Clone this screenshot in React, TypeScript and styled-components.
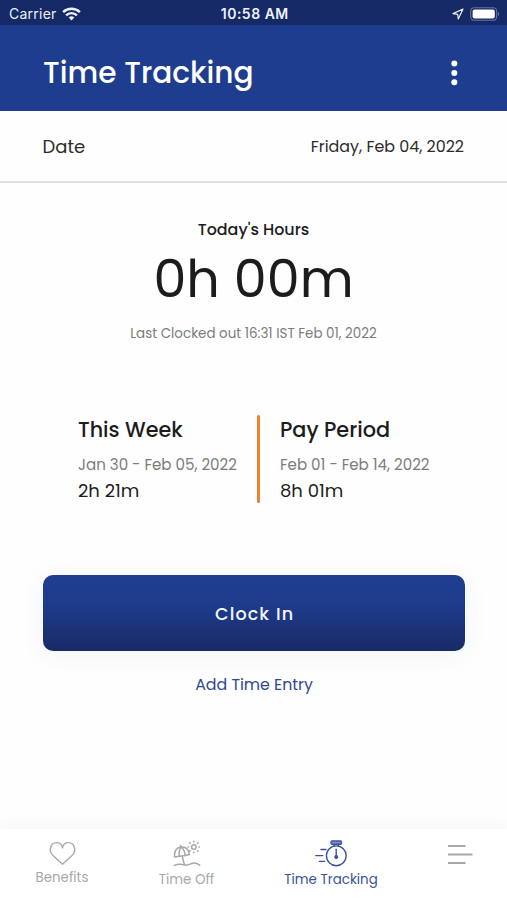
import React from 'react';
import styled, { createGlobalStyle } from 'styled-components';

const GlobalStyle = createGlobalStyle`
  *, *::before, *::after { box-sizing: border-box; }
  body {
    margin: 0;
    background: #fefefe;
    color: #1c1c1c;
    font-family: Poppins, Inter, sans-serif;
  }
`;

const blue = '#1f3d8f';
const grey = '#7c7c7c';

const Screen = styled.div`
  display: flex;
  flex-direction: column;
  width: 507px;
  height: 900px;
  overflow: hidden;
`;

interface LabelProps {
  $size: number;
  $line?: number;
  $weight?: number;
  $track?: number;
  $color?: string;
}

const Label = styled.span<LabelProps>`
  display: block;
  white-space: nowrap;
  font-size: ${(p) => p.$size}px;
  line-height: ${(p) => p.$line ?? 24}px;
  font-weight: ${(p) => p.$weight ?? 400};
  letter-spacing: ${(p) => p.$track ?? 0}px;
  margin-right: ${(p) => -(p.$track ?? 0)}px;
  color: ${(p) => p.$color ?? 'inherit'};
`;

const StatusBar = styled.div`
  display: grid;
  grid-template-columns: 1fr auto 1fr;
  align-items: center;
  height: 25px;
  padding: 3px 7px 0 9px;
  background: #142965;
  color: #eef1fa;
  font-family: Inter, sans-serif;
`;

const StatusGroup = styled.div<{ $end?: boolean }>`
  display: flex;
  align-items: center;
  gap: 6px;
  justify-content: ${(p) => (p.$end ? 'flex-end' : 'flex-start')};
`;

const Header = styled.header`
  display: flex;
  align-items: center;
  justify-content: space-between;
  height: 86px;
  padding: 9px 49px 0 43px;
  background: ${blue};
  color: #fff;
`;

const Title = styled.h1`
  margin: 0;
  font-size: 29.6px;
  line-height: 40px;
  font-weight: 500;
`;

const IconButton = styled.button`
  display: flex;
  padding: 0;
  border: 0;
  background: none;
  color: inherit;
`;

const DateRow = styled.section`
  display: flex;
  align-items: center;
  justify-content: space-between;
  height: 72px;
  padding: 1px 43px 0 42.5px;
  border-bottom: 2px solid #dfdfdf;
  color: #2b2b2b;
`;

const Today = styled.section`
  display: flex;
  flex-direction: column;
  align-items: center;
  padding-top: 35px;
`;

const HoursValue = styled.div`
  margin: 7px 0 15px;
  font-size: 52.4px;
  line-height: 60px;
`;

const Periods = styled.section`
  display: grid;
  grid-template-columns: 179px 3px 1fr;
  height: 88px;
  margin: 71px 0 0 78px;
`;

const Period = styled.div`
  display: flex;
  flex-direction: column;
  padding-top: 1px;
`;

const SecondPeriod = styled(Period)`
  padding-left: 20px;
`;

const PeriodRange = styled.div`
  margin: 11px 0 4px;
`;

const Divider = styled.div`
  border-radius: 2px;
  background: #e98433;
`;

const Actions = styled.section`
  display: flex;
  flex-direction: column;
  align-items: center;
  gap: 22px;
  margin: 72px 42px 0 43px;
`;

const ClockButton = styled.button`
  display: flex;
  align-items: center;
  justify-content: center;
  width: 100%;
  height: 76px;
  padding: 1px 0 0;
  border: 0;
  border-radius: 10px;
  background: linear-gradient(#1f3e90 0%, #1e3b8c 38%, #182b66 100%);
  box-shadow: 0 4px 26px rgba(31, 61, 143, 0.06);
  color: #f4f6ff;
  font-family: inherit;
`;

const TextButton = styled.button`
  padding: 0;
  border: 0;
  background: none;
  color: #2f488f;
  font-family: inherit;
`;

const Nav = styled.nav`
  display: grid;
  grid-template-columns: 124px 125px 164px 94px;
  height: 71px;
  margin-top: auto;
  background: #fff;
  box-shadow: 0 -3px 14px rgba(31, 61, 143, 0.045);
`;

const NavItem = styled.a<{ $active?: boolean; $drop?: number }>`
  display: flex;
  flex-direction: column;
  align-items: center;
  gap: 2px;
  padding-top: ${(p) => 10 + (p.$drop ?? 0)}px;
  color: ${(p) => (p.$active ? '#3a529b' : '#a8a8a8')};
`;

const Icon = styled.svg`
  display: block;
  flex: none;
  fill: none;
  stroke: currentColor;
  stroke-linecap: round;
  stroke-linejoin: round;
`;

const FlatIcon = styled(Icon)`
  stroke-linecap: butt;
`;

const WifiIcon = () => (
  <FlatIcon width="19" height="14" viewBox="0 0 19 14" strokeWidth="2.4">
    <path d="M1.1 5.2a12 12 0 0 1 16.8 0M4.1 8.4a7.6 7.6 0 0 1 10.8 0" />
    <path d="M9.5 13.4 6.7 10.6a4 4 0 0 1 5.6 0Z" fill="currentColor" stroke="none" />
  </FlatIcon>
);

const LocationIcon = () => (
  <Icon width="12" height="12" viewBox="0 0 12 12" strokeWidth="1.2">
    <path d="M11 1 1 5.6l4.7.7.6 4.7Z" />
  </Icon>
);

const BatteryIcon = () => (
  <Icon width="30" height="14" viewBox="0 0 30 14">
    <rect x=".7" y=".7" width="26" height="12.6" rx="3.6" stroke="#66739f" strokeWidth="1.1" />
    <rect x="2.6" y="2.6" width="22.2" height="8.8" rx="2" fill="#fff" stroke="none" />
    <path d="M28 4.8c1.6.7 1.6 3.7 0 4.4Z" fill="#66739f" stroke="none" />
  </Icon>
);

const MoreIcon = () => (
  <Icon width="8" height="26" viewBox="0 0 8 26">
    <g fill="currentColor" stroke="none">
      <circle cx="4.3" cy="3.6" r="3" />
      <circle cx="4.3" cy="13" r="3" />
      <circle cx="4.3" cy="22.3" r="3" />
    </g>
  </Icon>
);

const HeartIcon = () => (
  <Icon width="28" height="27" viewBox="0 0 28 27" strokeWidth="1.4">
    <path d="M14.5 25.2L5 16.6C2.6 14.2 2 11.6 2.4 9.3C3 5.8 5.5 3.6 8.6 3.6C11.6 3.6 14 5.6 14.5 8.8C15 5.6 17.4 3.6 20.4 3.6C23.5 3.6 26 5.8 26.6 9.3C27 11.6 26.4 14.2 24 16.6Z" />
  </Icon>
);

const BeachIcon = () => (
  <Icon width="28" height="28" viewBox="0 0 28 28" strokeWidth="1.5">
    <path d="M1.6 17C1 10.8 4 7.7 8 7.1C12 6.6 15.4 8.6 16.4 14.5L12.2 15.4 6.4 16.3Z" />
    <path d="M7.8 7 7.5 5.4M6.4 16.3C5.7 12.5 6.2 9.6 8 7.1C10.6 8.8 11.9 11.6 12.2 15.4M9.1 16 11.4 24.6" />
    <path d="M1.2 25.4C5 23.8 8 24 11.5 24.9C16 26 17.2 23.2 21 23.1C24 23 25 24 26.8 25.3" />
    <circle cx="20.8" cy="7" r="2.3" />
    <path d="M20.8 1.3v.5M20.8 12.2v.5M15.1 7h.5M26 7h.5M16.7 2.9l.4.4M24.5 10.7l.4.4M16.7 11.1l.4-.4M24.5 3.3l.4-.4" strokeWidth="1.6" />
  </Icon>
);

const StopwatchIcon = () => (
  <Icon width="34" height="28" viewBox="0 0 34 28" strokeWidth="1.4">
    <rect x="17" y="1" width="10.4" height="3.2" rx="1" fill="#8492c4" />
    <path d="M20 4.4v1.6M24.4 4.4v1.6" />
    <circle cx="22.3" cy="15.8" r="9.9" />
    <path d="M22.2 9.2v7.4" />
    <circle cx="22.2" cy="17" r="1.3" fill="currentColor" />
    <path d="M7 9.5h5M1.8 15.6h7M5.4 21.4h5.2" />
  </Icon>
);

const MenuIcon = () => (
  <FlatIcon width="26" height="22" viewBox="0 0 26 22" strokeWidth="2.2">
    <path d="M1 2h17.5M1 10.5h24.5M1 19h17.5" />
  </FlatIcon>
);

export default function App() {
  return (
    <Screen>
      <GlobalStyle />
      <StatusBar>
        <StatusGroup>
          <Label $size={14} $line={20} $track={0.25}>Carrier</Label>
          <WifiIcon />
        </StatusGroup>
        <Label $size={14} $line={20} $weight={600} $track={0.5}>10:58 AM</Label>
        <StatusGroup $end>
          <LocationIcon />
          <BatteryIcon />
        </StatusGroup>
      </StatusBar>

      <Header>
        <Title>Time Tracking</Title>
        <IconButton aria-label="More options"><MoreIcon /></IconButton>
      </Header>

      <DateRow>
        <Label $size={18}>Date</Label>
        <Label $size={15.9}>Friday, Feb 04, 2022</Label>
      </DateRow>

      <Today>
        <Label $size={15.9} $weight={500}>Today's Hours</Label>
        <HoursValue>0h 00m</HoursValue>
        <Label $size={13.45} $line={20} $color={grey}>
          Last Clocked out 16:31 IST Feb 01, 2022
        </Label>
      </Today>

      <Periods>
        <Period>
          <Label $size={20.7} $line={28} $weight={500}>This Week</Label>
          <PeriodRange>
            <Label $size={15.05} $line={20} $color={grey}>Jan 30 - Feb 05, 2022</Label>
          </PeriodRange>
          <Label $size={18}>2h 21m</Label>
        </Period>
        <Divider />
        <SecondPeriod>
          <Label $size={20.8} $line={28} $weight={500}>Pay Period</Label>
          <PeriodRange>
            <Label $size={15.05} $line={20} $color={grey}>Feb 01 - Feb 14, 2022</Label>
          </PeriodRange>
          <Label $size={18}>8h 01m</Label>
        </SecondPeriod>
      </Periods>

      <Actions>
        <ClockButton>
          <Label $size={17.6} $weight={500} $track={1.1}>Clock In</Label>
        </ClockButton>
        <TextButton>
          <Label $size={15.8}>Add Time Entry</Label>
        </TextButton>
      </Actions>

      <Nav>
        <NavItem>
          <HeartIcon />
          <Label $size={13.4} $line={20}>Benefits</Label>
        </NavItem>
        <NavItem $drop={1}>
          <BeachIcon />
          <Label $size={13.4} $line={20}>Time Off</Label>
        </NavItem>
        <NavItem $active $drop={1}>
          <StopwatchIcon />
          <Label $size={13.4} $line={20}>Time Tracking</Label>
        </NavItem>
        <NavItem $drop={5} aria-label="Menu">
          <MenuIcon />
        </NavItem>
      </Nav>
    </Screen>
  );
}
